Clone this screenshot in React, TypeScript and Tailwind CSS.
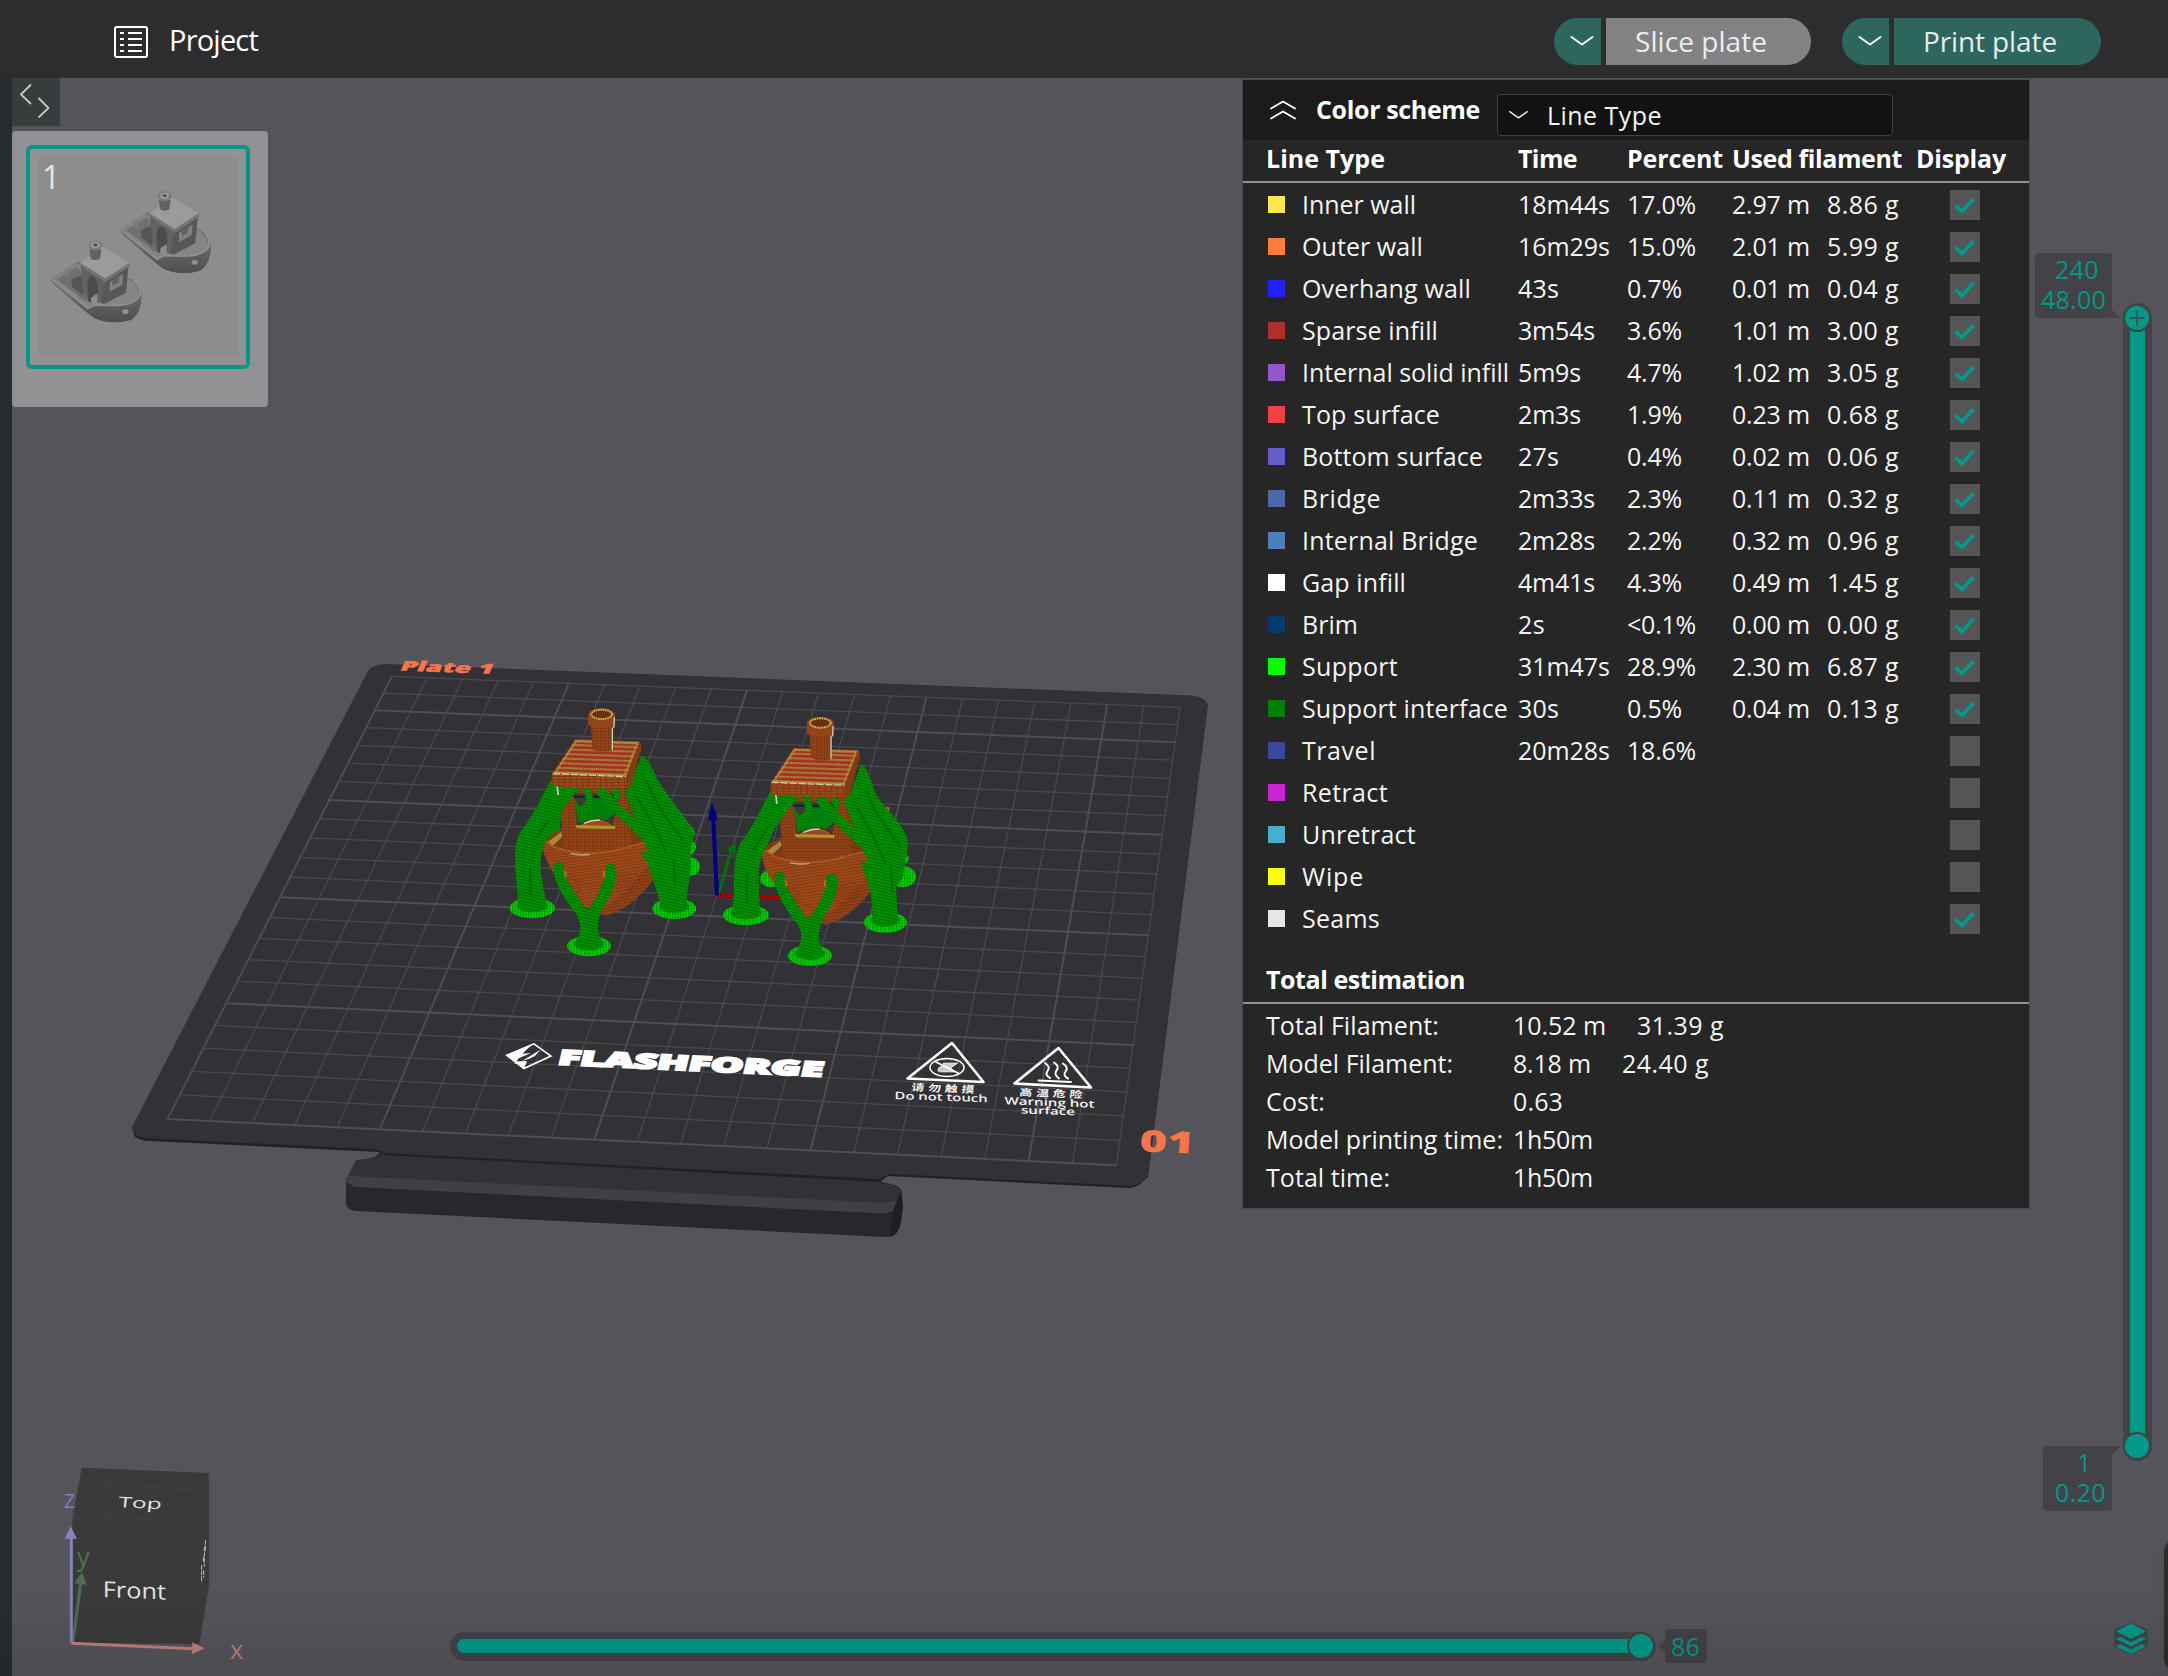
import { useLayoutEffect, useRef, useState } from "react";

type FitProps = { children: string; w: number; className?: string };

/** Text tracked so that it spans exactly `w` pixels. */
function Fit({ children, w, className = "" }: FitProps) {
  const ref = useRef<HTMLSpanElement>(null);
  const [spacing, setSpacing] = useState<number | null>(null);
  useLayoutEffect(() => {
    if (!ref.current || spacing !== null) return;
    const natural = ref.current.getBoundingClientRect().width;
    setSpacing((w - natural) / children.length);
  }, [w, children, spacing]);
  return (
    <span ref={ref} className={`inline-block w-fit whitespace-pre ${className}`} style={{ letterSpacing: spacing === null ? undefined : `${spacing}px` }}>
      {children}
    </span>
  );
}

/* ---------- data ---------- */

type Row = {
  color: string;
  name: [string, number];
  time?: [string, number];
  percent?: [string, number];
  used?: [string, string];
  on: boolean;
};

const rows: Row[] = [
  { color: "bg-[#ffe64d]", name: ["Inner wall", 114], time: ["18m44s", 92], percent: ["17.0%", 69], used: ["2.97 m", "8.86 g"], on: true },
  { color: "bg-[#ff7d38]", name: ["Outer wall", 121], time: ["16m29s", 92], percent: ["15.0%", 69], used: ["2.01 m", "5.99 g"], on: true },
  { color: "bg-[#1f1fff]", name: ["Overhang wall", 169], time: ["43s", 41], percent: ["0.7%", 55], used: ["0.01 m", "0.04 g"], on: true },
  { color: "bg-[#b03029]", name: ["Sparse infill", 136], time: ["3m54s", 77], percent: ["3.6%", 55], used: ["1.01 m", "3.00 g"], on: true },
  { color: "bg-[#9654cc]", name: ["Internal solid infill", 207], time: ["5m9s", 63], percent: ["4.7%", 55], used: ["1.02 m", "3.05 g"], on: true },
  { color: "bg-[#f04040]", name: ["Top surface", 138], time: ["2m3s", 63], percent: ["1.9%", 55], used: ["0.23 m", "0.68 g"], on: true },
  { color: "bg-[#665cc7]", name: ["Bottom surface", 181], time: ["27s", 41], percent: ["0.4%", 55], used: ["0.02 m", "0.06 g"], on: true },
  { color: "bg-[#4d66a8]", name: ["Bridge", 79], time: ["2m33s", 77], percent: ["2.3%", 55], used: ["0.11 m", "0.32 g"], on: true },
  { color: "bg-[#4d80ba]", name: ["Internal Bridge", 176], time: ["2m28s", 77], percent: ["2.2%", 55], used: ["0.32 m", "0.96 g"], on: true },
  { color: "bg-white", name: ["Gap infill", 104], time: ["4m41s", 77], percent: ["4.3%", 55], used: ["0.49 m", "1.45 g"], on: true },
  { color: "bg-[#003b6e]", name: ["Brim", 56], time: ["2s", 27], percent: ["<0.1%", 69], used: ["0.00 m", "0.00 g"], on: true },
  { color: "bg-[#00ff00]", name: ["Support", 96], time: ["31m47s", 92], percent: ["28.9%", 69], used: ["2.30 m", "6.87 g"], on: true },
  { color: "bg-[#008000]", name: ["Support interface", 206], time: ["30s", 41], percent: ["0.5%", 55], used: ["0.04 m", "0.13 g"], on: true },
  { color: "bg-[#38489b]", name: ["Travel", 74], time: ["20m28s", 92], percent: ["18.6%", 69], on: false },
  { color: "bg-[#cd22d6]", name: ["Retract", 86], on: false },
  { color: "bg-[#49adcf]", name: ["Unretract", 114], on: false },
  { color: "bg-[#ffff00]", name: ["Wipe", 62], on: false },
  { color: "bg-[#e6e6e6]", name: ["Seams", 78], on: true },
];

type Total = { label: [string, number]; value: [string, number]; extra?: string };
const totals: Total[] = [
  { label: ["Total Filament:", 173], value: ["10.52 m", 93], extra: "31.39 g" },
  { label: ["Model Filament:", 187], value: ["8.18 m", 78], extra: "24.40 g" },
  { label: ["Cost:", 59], value: ["0.63", 50] },
  { label: ["Model printing time:", 237], value: ["1h50m", 80] },
  { label: ["Total time:", 124], value: ["1h50m", 80] },
];

/* ---------- header ---------- */

function Chevron({ className }: { className: string }) {
  return (
    <svg viewBox="0 0 24 12" className={className} fill="none" stroke="currentColor" strokeWidth="2" strokeLinecap="round" strokeLinejoin="round">
      <path d="M1.5 2 12 9.5 22.5 2" />
    </svg>
  );
}

function Header() {
  return (
    <header className="flex h-[78px] shrink-0 items-center bg-[#2d2d2f] pr-[67px] pl-[114px] text-white">
      <svg viewBox="0 0 34 32" className="mt-[6px] h-8 w-[34px]" fill="none" stroke="#fff" strokeWidth="2">
        <rect x="1" y="1" width="32" height="30" rx="2" />
        <path d="M6 7h4M14 7h14M6 13h4M14 13h14M6 19h4M14 19h14M6 25h4M14 25h14" />
      </svg>
      <Fit w={89} className="ml-[21px] text-[29px] leading-none font-medium">Project</Fit>
      <div className="ml-auto flex items-center pb-px text-[28px] leading-none">
        <div className="mt-[5px] flex h-[47px] gap-[5px]">
          <div className="flex w-[47px] items-center justify-center rounded-l-full bg-[#2c665c] pl-2">
            <Chevron className="h-[12px] w-[24px]" />
          </div>
          <div className="flex w-[205px] items-center rounded-r-full bg-[#828284] pl-[29px] text-[#ececec]">
            <Fit w={132}>Slice plate</Fit>
          </div>
        </div>
        <div className="mt-[5px] ml-[31px] flex h-[47px] gap-[5px]">
          <div className="flex w-[47px] items-center justify-center rounded-l-full bg-[#2c665c] pl-2">
            <Chevron className="h-[12px] w-[24px]" />
          </div>
          <div className="flex w-[207px] items-center rounded-r-full bg-[#2c665c] pl-[29px] text-[#e3eeec]">
            <Fit w={134}>Print plate</Fit>
          </div>
        </div>
      </div>
    </header>
  );
}

/* ---------- 3D bed ---------- */

type Pt = [number, number];
// Grid corners on screen: top-left, top-right, bottom-right, bottom-left
const corners: Pt[] = [[392, 676.4], [1180, 707.3], [1116.4, 1165.3], [167.5, 1119]];

function project(u: number, v: number): Pt {
  const [[x0, y0], [x1, y1], [x2, y2], [x3, y3]] = corners;
  const dx1 = x1 - x2, dx2 = x3 - x2, sx = x0 - x1 + x2 - x3;
  const dy1 = y1 - y2, dy2 = y3 - y2, sy = y0 - y1 + y2 - y3;
  const det = dx1 * dy2 - dx2 * dy1;
  const g = (sx * dy2 - dx2 * sy) / det;
  const h = (dx1 * sy - sx * dy1) / det;
  const w = g * u + h * v + 1;
  return [
    ((x1 - x0 + g * x1) * u + (x3 - x0 + h * x3) * v + x0) / w,
    ((y1 - y0 + g * y1) * u + (y3 - y0 + h * y3) * v + y0) / w,
  ];
}

const CELLS = 22;
const steps = Array.from({ length: CELLS + 1 }, (_, i) => i);

function GridLines() {
  return (
    <g>
      {steps.map((i) => {
        const t = i / CELLS;
        const a = project(t, 0), b = project(t, 1), c = project(0, t), d = project(1, t);
        const boldCol = i % 5 === 0, boldRow = (CELLS - i) % 5 === 0;
        return (
          <g key={i}>
            <line x1={a[0]} y1={a[1]} x2={b[0]} y2={b[1]} stroke={boldCol ? "#4d4d56" : "#48484f"} strokeWidth={boldCol ? 2 : 1.3} />
            <line x1={c[0]} y1={c[1]} x2={d[0]} y2={d[1]} stroke={boldRow ? "#4d4d56" : "#48484f"} strokeWidth={boldRow ? 2 : 1.3} />
          </g>
        );
      })}
    </g>
  );
}

function Bed() {
  return (
    <g>
      {/* handle */}
      <path d="M383 1150 L375 1157 L356 1161 L346 1180 L346 1204 Q347 1210 356 1211 L885 1237 Q898 1237 901 1222 L903 1206 L901 1190 Q899 1185 890 1184 L879 1181 L888 1172Z" fill="#28272b" />
      <path d="M356 1160 L376 1158 L384 1152 L880 1178 L880 1183 L892 1185 Q901 1187 901 1194 L900 1202 L884 1205 L346 1180Z" fill="#323136" />
      <path d="M349 1176 L884 1203 L898 1200 L893 1211 L884 1213.5 L355 1187 L346 1182Z" fill="#403f44" />
      <path d="M903 1206 L901 1190 L893 1211 L890 1237 Q899 1235 901 1222Z" fill="#1f1f22" />
      {/* plate with a thin side wall */}
      <path d="M133 1126 L134 1136 Q140 1141 150 1141 L378 1152 L384 1155 L880 1182 L888 1176 L1128 1188 Q1135 1188 1140 1184 L1148 1177 L1148 1165Z" fill="#222124" />
      <path d="M368.6 669.7 Q374 664 387 664 L1192 695.5 Q1206 697 1208 705 L1148.5 1174 Q1142 1184 1132 1186 L890 1174 L879 1179 L384 1153 Q383 1150 370 1149 L145 1138 Q132 1136 132 1127Z" fill="#323136" />
      <GridLines />
      <g fill="#f8754b" fontFamily="Open Sans, sans-serif" fontWeight="800">
        <text transform="matrix(1 .035 -.45 1 399 670.5)" fontSize="13.5" textLength="93" lengthAdjust="spacingAndGlyphs" stroke="#f8754b" strokeWidth=".4">Plate 1</text>
        <text transform="matrix(1 .04 -.06 1 1139 1151.500)" fontSize="30" textLength="55" lengthAdjust="spacingAndGlyphs">01</text>
      </g>
      {/* brand */}
      <g fill="#fff">
        <path d="M505.700 1055.200 L533.900 1043.300 L520 1054 L531 1053 L512 1061 L525 1061.500 L523.900 1069Z" />
        <path d="M507 1055.300 L533.900 1043.800 L551 1056 L523.900 1068.500Z" fill="none" stroke="#fff" strokeWidth="1.6" />
        <path d="M505.700 1055.200 L524 1069 L527 1061 L522 1061.500 L514 1064 L519 1058 L525 1051 L533 1044Z" />
        <path d="M522 1061 L540 1050 L535 1056 L530 1058.500Z" />
        <text transform="matrix(1 .046 -.24 1 557 1064.500)" fontFamily="Open Sans, sans-serif" fontWeight="800" fontSize="20.500" textLength="265" lengthAdjust="spacingAndGlyphs" stroke="#fff" strokeWidth="1.7">FLASHFORGE</text>
      </g>
      {/* warnings */}
      <g fill="none" stroke="#fff" strokeLinejoin="round" strokeLinecap="round">
        <path d="M952 1043 L907.500 1078.500 L983.500 1082Z" strokeWidth="2.6" />
        <ellipse cx="947" cy="1067.500" rx="17" ry="9" strokeWidth="1.6" />
        <path d="M935 1061.500 L959 1073.500" strokeWidth="1.600" />
        <path d="M938 1071 Q937 1066 944 1066 L943 1063 L958 1063 L951 1068 L955 1072 L942 1072Z" fill="#fff" fillOpacity=".75" strokeWidth=".6" />
        <path d="M1058.500 1048 L1014.500 1083.500 L1091 1087.500Z" strokeWidth="2.600" />
        <path d="M1045 1063 q6 4 2.500 8 q-3 4 2.500 7 M1054 1062.500 q6 4 2.500 8 q-3 4 2.500 8 M1063 1063.500 q6 4 2.500 8 q-3 4 2.500 7" strokeWidth="2" />
        <path d="M1038.500 1080.500 L1071 1082" strokeWidth="1.800" />
      </g>
      <g fill="#f2f2f2" fontFamily="Open Sans, Noto Sans CJK SC, sans-serif" fontWeight="600">
        <text transform="matrix(1 .04 -.1 .72 911 1090.500)" fontSize="13" textLength="63" fontFamily="Noto Sans CJK SC, sans-serif">请勿触摸</text>
        <text transform="matrix(1 .035 0 .8 894.600 1099)" fontSize="13" textLength="93" lengthAdjust="spacingAndGlyphs">Do not touch</text>
        <text transform="matrix(1 .04 -.1 .72 1019 1095.500)" fontSize="13" textLength="63" fontFamily="Noto Sans CJK SC, sans-serif">高温危险</text>
        <text transform="matrix(1 .04 0 .8 1004.500 1104.200)" fontSize="13" textLength="90" lengthAdjust="spacingAndGlyphs">Warning hot</text>
        <text transform="matrix(1 .035 0 .8 1021 1113.500)" fontSize="13" textLength="54" lengthAdjust="spacingAndGlyphs">surface</text>
      </g>
    </g>
  );
}

/* ---------- sliced boats, drawn at three times their size ---------- */

function Foot({ x, y, rx = 66 }: { x: number; y: number; rx?: number }) {
  return (
    <g>
      <ellipse cx={x} cy={y} rx={rx} ry={31} fill="url(#foot)" />
      <ellipse cx={x} cy={y - 7} rx={rx * 0.68} ry={20} fill="#008a00" />
    </g>
  );
}

function Hull() {
  return (
    <g>
      <path d="M186 474 L245 448 L255 515 L300 522 L490 486 L548 476 L558 520 L500 540 L300 545 L215 520Z" fill="#7e3a14" />
      <path d="M200 488 L244 455 L247 470 L215 500Z" fill="#a58a35" />
      <path d="M560 352 L572 356 L566 372Z" fill="#c0602c" />
      {/* cabin */}
      <path d="M234 312 L470 318 L500 495 L410 512 L300 524 L252 516 L244 420Z" fill="url(#wall)" />
      <path d="M438 320 L468 318 L500 495 L455 500Z" fill="#7d3912" />
      <path d="M282 340 L408 340 L408 396 L396 442 L292 440Z" fill="#3a3a30" />
      <path d="M280 350 L405 350" stroke="#12204e" strokeWidth="6" />
      <path d="M282 352 L300 380 L340 356 L400 356 L408 396 L380 420 L350 415 L295 430Z" fill="#00800a" />
      <path d="M300 440 Q350 400 396 440Z" fill="#99461a" stroke="#b4571f" strokeWidth="5" />
      <path d="M312 430 Q335 420 360 420" stroke="#d8cdb8" strokeWidth="4" fill="none" />
      <path d="M286 435 L406 438 L404 447 L290 445Z" fill="#a8952c" />
      {/* hull */}
      <path d="M185 474 L226 500 Q300 530 400 513 L496 487 L560 520 L520 600 Q450 690 378 707 Q300 690 240 606 Q186 540 185 474Z" fill="url(#hull)" />
      <path d="M185 476 L226 502 Q300 530 400 513 L496 487" fill="none" stroke="#b86128" strokeWidth="6" strokeDasharray="5 3" />
      <path d="M272 521 Q300 528 330 523" stroke="#c9b7a6" strokeWidth="4" fill="none" opacity=".8" />
      <g fill="none" stroke="#7c3610" strokeWidth="3" opacity=".7">
        <ellipse cx="443" cy="612" rx="38" ry="27" transform="rotate(-35 443 612)" />
        <ellipse cx="443" cy="612" rx="24" ry="16" transform="rotate(-35 443 612)" />
        <ellipse cx="443" cy="612" rx="10" ry="7" transform="rotate(-35 443 612)" />
        <ellipse cx="278" cy="610" rx="18" ry="32" transform="rotate(-40 278 610)" />
        <ellipse cx="278" cy="610" rx="9" ry="18" transform="rotate(-40 278 610)" />
      </g>
      <path d="M520 600 Q450 690 378 707 Q360 705 345 697 Q440 650 515 540Z" fill="#000" opacity=".08" />
    </g>
  );
}

function Roof() {
  return (
    <g>
      <path d="M229 318 L234 318 L237 345 L232 345Z" fill="#d8d0c8" />
      <path d="M285 178 L476 184 Q484 187 483 205 L453 318 Q448 326 436 326 L222 319 Q214 314 215 285Z" fill="url(#brick)" />
      <path d="M440 290 L480 188 L483 208 L453 318 L440 324Z" fill="#7e3b14" />
      <path d="M286 180 L478 186 L438 290 L218 281Z" fill="#b02c28" />
      <path d="M286 180 L478 186 L438 290 L218 281Z" fill="url(#roof)" />
      <path d="M288 184 L472 190 L434 286 L226 278Z" fill="none" stroke="#b5983a" strokeWidth="6" strokeDasharray="4 2" />
      <path d="M218 281 L438 290" stroke="#cfc8a2" strokeWidth="4" strokeDasharray="22 5" />
      {/* chimney */}
      <path d="M333 130 L400 130 L400 210 Q365 222 337 208Z" fill="url(#wall)" />
      <path d="M324 104 L405 104 L406 134 Q365 152 325 136Z" fill="#94441a" />
      <ellipse cx="365" cy="104" rx="40" ry="19" fill="#94441a" />
      <ellipse cx="365" cy="103" rx="31" ry="14" fill="#6d300f" stroke="#cbb452" strokeWidth="6" strokeDasharray="5 2" />
      <path d="M403 112 L402 140 L397 146 L397 210" stroke="#cfc6bd" strokeWidth="4" fill="none" />
    </g>
  );
}

function FrontSupport() {
  return (
    <g>
      <Foot x={327} y={798} />
      <path d="M220 565 Q222 546 238 546 Q254 550 252 572 Q258 605 322 690 Q376 620 374 575 Q378 550 394 551 Q410 555 410 578 Q408 620 380 665 Q352 705 354 750 L366 790 Q326 812 288 792 L300 750 Q304 730 290 705 Q222 620 220 565Z" fill="url(#green)" />
      <path d="M252 572 q8 10 2 18 M375 572 q-8 8 0 20" stroke="#c0632b" strokeWidth="6" fill="none" />
    </g>
  );
}

function TwigSupports() {
  return (
    <g fill="none" stroke="url(#green)" strokeLinecap="round" strokeLinejoin="round">
      <path d="M272 332 L215 410 L175 470" strokeWidth="28" />
      <path d="M265 328 L290 332" strokeWidth="14" />
      <path d="M322 330 L330 360 L318 390" strokeWidth="22" />
      <path d="M366 336 L410 385 L500 470 L545 560" strokeWidth="30" />
      <path d="M408 335 L412 350" strokeWidth="22" />
      <path d="M455 335 Q480 420 565 520" strokeWidth="40" />
    </g>
  );
}

function Boats() {
  return (
    <g transform="translate(480 680) scale(.33333)">
      {/* left model */}
      <g fill="url(#foot)">
        <circle cx="622" cy="458" r="22" />
        <circle cx="626" cy="502" r="22" />
        <circle cx="632" cy="560" r="28" />
      </g>
      <path d="M196 400 L244 400 L240 450 L215 475 L190 470Z" fill="#00860a" />
      <Hull />
      <Foot x={157} y={684} rx={68} />
      <Foot x={583} y={686} rx={66} />
      <path d="M213 300 C190 340 165 400 122 455 C98 490 106 560 110 610 L116 682 Q155 706 202 684 L186 600 C178 550 182 510 202 478 L232 442 L246 395 L262 330Z" fill="url(#green)" />
      <path d="M484 228 C508 232 516 270 540 310 C575 365 625 420 640 452 C646 480 628 490 632 540 C634 600 616 640 622 684 Q585 706 544 684 C536 640 512 590 505 555 L481 516 L530 518 C500 460 460 410 436 335 L455 300Z" fill="url(#green)" />
      <TwigSupports />
      <path d="M500 300 Q520 370 610 480 M470 350 Q520 430 560 520 M580 540 L585 610 M205 420 L165 480 M150 560 L152 650" stroke="#006400" strokeWidth="6" fill="none" opacity=".7" />
      <Roof />
      <FrontSupport />

      {/* origin axes */}
      <path d="M711 645 L900 653" stroke="#a30000" strokeWidth="11" />
      <path d="M716 642 L752 518" stroke="#006f10" strokeWidth="9" />
      <path d="M766 485 L740 510 L768 522Z" fill="#006f10" />
      <path d="M711 647 L700 420" stroke="#00007e" strokeWidth="12" />
      <path d="M696 367 L684 418 Q700 428 714 418Z" fill="#00007e" />

      {/* right model */}
      <g fill="url(#foot)">
        <ellipse cx="1268" cy="590" rx="40" ry="32" />
        <ellipse cx="872" cy="596" rx="32" ry="26" />
        <circle cx="1268" cy="535" r="18" />
      </g>
      <path d="M1120 400 L1145 420 L1150 520 L1120 520Z" fill="#8e1f1f" />
      <g transform="translate(658 27)"><Hull /></g>
      <Foot x={798} y={705} rx={69} />
      <Foot x={1216} y={727} rx={65} />
      <path d="M873 330 C850 370 820 440 782 488 C760 530 762 590 762 640 L756 700 Q798 724 840 700 L836 610 C834 570 840 530 860 500 L905 400 L930 350Z" fill="url(#green)" />
      <path d="M1142 254 C1166 262 1170 300 1192 350 C1225 395 1275 440 1283 480 C1286 520 1270 560 1270 590 L1248 620 L1254 725 Q1215 744 1180 725 C1178 670 1170 620 1155 585 L1144 545 L1188 545 C1165 490 1120 420 1096 362 L1115 330Z" fill="url(#green)" />
      <g transform="translate(658 27)"><TwigSupports /></g>
      <path d="M1160 330 Q1180 400 1262 500 M1130 380 Q1180 460 1215 550 M1232 560 L1238 640 M865 440 L820 510 M800 580 L800 670" stroke="#006400" strokeWidth="6" fill="none" opacity=".7" />
      <g transform="translate(656 26)"><Roof /></g>
      <g transform="translate(663 29)"><FrontSupport /></g>
    </g>
  );
}

function Patterns() {
  return (
    <defs>
      <pattern id="green" width="8" height="9" patternUnits="userSpaceOnUse" patternTransform="rotate(12)">
        <rect width="8" height="9" fill="#009a00" />
        <path d="M0 2H8" stroke="#007000" strokeWidth="4" />
        <path d="M1 6H4" stroke="#008400" strokeWidth="3" />
      </pattern>
      <pattern id="foot" width="8" height="9" patternUnits="userSpaceOnUse">
        <rect width="8" height="9" fill="#00da00" />
        <path d="M2 0V9" stroke="#008c00" strokeWidth="3" />
        <path d="M0 1H8" stroke="#00a800" strokeWidth="2" />
      </pattern>
      <pattern id="wall" width="8" height="9" patternUnits="userSpaceOnUse">
        <rect width="8" height="9" fill="#9a481b" />
        <path d="M0 2H8M1 0V9" stroke="#7c3711" strokeWidth="3" />
      </pattern>
      <pattern id="hull" width="8" height="9" patternUnits="userSpaceOnUse" patternTransform="rotate(-8)">
        <rect width="8" height="9" fill="#a14b1c" />
        <path d="M0 2H8" stroke="#843b13" strokeWidth="4" />
      </pattern>
      <pattern id="brick" width="18" height="9" patternUnits="userSpaceOnUse">
        <rect width="18" height="9" fill="#9e4b1c" />
        <path d="M0 1H18M2 0V9" stroke="#783610" strokeWidth="3" />
      </pattern>
      <pattern id="roof" width="6" height="14" patternUnits="userSpaceOnUse" patternTransform="rotate(2)">
        <rect width="6" height="6" fill="#a88b36" />
        <rect width="2" height="14" fill="#7a3a1e" opacity=".6" />
      </pattern>
      <linearGradient id="deck" x1="0" y1="0" x2="0" y2="1">
        <stop offset="0" stopColor="#777" />
        <stop offset="1" stopColor="#4e4e4e" />
      </linearGradient>
    </defs>
  );
}

/* ---------- view cube ---------- */

function ViewCube() {
  return (
    <g transform="translate(0 1420) scale(.33333)">
      <path d="M245 143 L627 159 L627 500 L620 540 L598 672 L215 668 L217 300Z" fill="#3a3a3a" />
      <g stroke="#464648" strokeWidth="2" fill="none">
        <path d="M240 193 L622 209 M220 290 L575 304 M340 148 L310 335 M530 158 L500 350 M620 200 L597 350 M627 159 V500" />
      </g>
      <path d="M616 360 V395 M613 380 V440 M610 410 V425 M605 435 V487 M611 450 V472" stroke="#d8d8d8" strokeWidth="2.500" strokeDasharray="14 3" />
      <g fill="#e2e2e2" fontFamily="Open Sans, sans-serif">
        <text transform="matrix(1 .04 -.1 1 354 262)" fontSize="44" textLength="130" lengthAdjust="spacingAndGlyphs">Top</text>
        <text transform="matrix(1 .04 0 1 308 531)" fontSize="66" textLength="190" lengthAdjust="spacingAndGlyphs">Front</text>
      </g>
      <path d="M219 664 L242 490" stroke="#4f6d50" strokeWidth="9" />
      <path d="M246 456 L223 490 L260 494Z" fill="#4f6d50" />
      <path d="M214 668 V350" stroke="#8484c4" strokeWidth="9" />
      <path d="M212 319 L194 356 H231Z" fill="#8484c4" />
      <path d="M214 670 L580 686" stroke="#c07c7a" strokeWidth="9" />
      <path d="M614 685 L577 667 L576 703Z" fill="#c07c7a" />
      <g fontFamily="Open Sans, sans-serif" fontSize="76">
        <text x="192" y="265" fill="#7d7dba" fontSize="58">Z</text>
        <text x="231" y="439" fill="#52704f">y</text>
        <text x="690" y="717" fill="#c07c7a">x</text>
      </g>
    </g>
  );
}

/* ---------- plate thumbnail ---------- */

function MiniBoat() {
  return (
    <g>
      <path d="M361 693 L440 637 L480 650 L600 690 Q630 700 633 740 Q630 795 600 812 Q540 828 490 806 Q430 760 370 705Z" fill="#686868" />
      <path d="M368 690 L440 642 L470 660 L600 692 Q625 712 624 742 Q600 765 565 764 L492 766 L474 776Z" fill="#858585" />
      <path d="M378 690 L440 652 L465 690 L470 760Z" fill="#6f6f6f" />
      <path d="M362 692 L471 780 L492 768 Q560 772 590 766 Q628 755 632 742 Q630 795 600 812 Q540 828 490 806 Q430 762 362 692Z" fill="url(#deck)" />
      <path d="M363 690 L472 777 L492 766 Q560 770 590 764 Q625 752 628 735 Q628 705 602 687" fill="none" stroke="#8f8f8f" strokeWidth="6" />
      <path d="M363 690 L440 638" stroke="#858585" strokeWidth="6" />
      <path d="M422 690 L455 678 L458 740 L424 712Z" fill="#555" />
      <path d="M404 658 h14 v24 h-14Z" fill="#7b7b7b" />
      <path d="M449 640 L524 688 L514 762 L470 750 L456 720Z" fill="#626262" />
      <path d="M472 755 L470 700 Q474 675 490 682 Q502 692 502 720 L502 740 L484 745 L480 760Z" fill="#4c4c4c" />
      <path d="M481 745 L500 732 V765 L481 758Z" fill="#8d8d8d" />
      <path d="M524 686 L594 646 L586 730 L520 764 L512 760Z" fill="#575757" />
      <path d="M537 698 L577 674 L575 706 L537 727Z" fill="#828282" />
      <path d="M545 690 L566 680 L564 700 L545 708Z" fill="#626262" />
      <path d="M447 640 L517 594 L597 640 L524 688Z" fill="#9b9b9b" />
      <path d="M447 640 L524 688 L597 640 V651 L524 699 L449 650Z" fill="#747474" />
      <path d="M477 600 H512 L508 628 Q493 636 480 628Z" fill="#616161" />
      <ellipse cx="494" cy="589" rx="20" ry="15" fill="#7c7c7c" />
      <ellipse cx="494" cy="587" rx="13" ry="9" fill="#9f9f9f" />
      <ellipse cx="494" cy="587" rx="7" ry="5" fill="#555" />
      <ellipse cx="584" cy="787" rx="9" ry="7" fill="#929292" />
    </g>
  );
}

function PlateCard() {
  return (
    <div className="mt-[5px] h-[276px] w-[256px] rounded bg-[#929294] pt-[14px] pl-[14px]">
      <div className="h-[224px] w-[224px] rounded-md border-4 border-[#009888] p-[8px]">
        <div className="relative size-[200px] bg-[#8d8d8e] pt-[4px] pl-[4px] text-[32px] leading-[32px] text-[#e6e6e6]">
          1
          <svg viewBox="114 471 600 600" className="absolute inset-0 h-full w-full">
            <MiniBoat />
            <g transform="translate(-208 148)"><MiniBoat /></g>
          </svg>
        </div>
      </div>
    </div>
  );
}

/* ---------- legend panel ---------- */

function Check({ on }: { on: boolean }) {
  return (
    <span className="mt-px ml-[34px] flex size-[30px] items-center justify-center bg-[#555556]">
      {on && (
        <svg viewBox="0 0 30 30" className="size-[30px]" fill="none" stroke="#009888" strokeWidth="4">
          <path d="M5.500 15.500 12 21.500 23.500 9" />
        </svg>
      )}
    </span>
  );
}

function Legend() {
  return (
    <section className="absolute top-px left-[1242px] flex h-[1130px] w-[788px] flex-col border border-[#47474c] bg-[#262626] text-[25px] leading-[34px] text-[#f4f4f4]">
      <div className="flex h-[60px] shrink-0 items-center bg-[#1b1b1c] pb-[2px] pl-[27px]">
        <svg viewBox="0 0 26 20" className="mt-px h-5 w-[26px]" fill="none" stroke="#fff" strokeWidth="1.8" strokeLinecap="round" strokeLinejoin="round">
          <path d="M1 8.500 13 1.500 25 8.500M1 18.500 13 11.500 25 18.500" />
        </svg>
        <Fit w={164} className="ml-5 font-bold text-white">Color scheme</Fit>
        <div className="mt-[12px] ml-[17px] flex h-[42px] w-[396px] items-center rounded border border-[#3f3f46] bg-[#121212] pb-px pl-[10px]">
          <Chevron className="h-[10px] w-[21px] stroke-[1.6]" />
          <Fit w={115} className="ml-[18px]">Line Type</Fit>
        </div>
      </div>
      <div className="grid h-[43px] shrink-0 grid-cols-[252px_109px_105px_184px_1fr] items-center border-b-2 border-[#909192] pb-[6px] pl-[23px] font-bold text-white">
        <Fit w={119}>Line Type</Fit>
        <Fit w={59}>Time</Fit>
        <Fit w={96}>Percent</Fit>
        <Fit w={170}>Used filament</Fit>
        <Fit w={90}>Display</Fit>
      </div>
      <div className="flex shrink-0 flex-col">
        {rows.map((r) => (
          <div key={r.name[0]} className="grid h-[42px] grid-cols-[36px_216px_109px_105px_95px_89px_1fr] items-center pl-[23px]">
            <span className={`ml-[2px] size-[17px] ${r.color}`} />
            <Fit w={r.name[1]}>{r.name[0]}</Fit>
            <div>{r.time && <Fit w={r.time[1]}>{r.time[0]}</Fit>}</div>
            <div>{r.percent && <Fit w={r.percent[1]}>{r.percent[0]}</Fit>}</div>
            <div>{r.used && <Fit w={78}>{r.used[0]}</Fit>}</div>
            <div>{r.used && <Fit w={72}>{r.used[1]}</Fit>}</div>
            <Check on={r.on} />
          </div>
        ))}
      </div>
      <div className="mt-[18px] flex h-[47px] shrink-0 items-center border-b-2 border-[#909192] pb-[2px] pl-[23px] font-bold text-white">
        <Fit w={199}>Total estimation</Fit>
      </div>
      <div className="mt-[2px] flex flex-col pl-[23px]">
        {totals.map((t) => (
          <div key={t.label[0]} className="flex h-[38px] items-center">
            <div className="w-[247px]"><Fit w={t.label[1]}>{t.label[0]}</Fit></div>
            <Fit w={t.value[1]}>{t.value[0]}</Fit>
            {t.extra && <Fit w={87} className="ml-[31px]">{t.extra}</Fit>}
          </div>
        ))}
      </div>
    </section>
  );
}

/* ---------- sliders ---------- */

function LayerSlider() {
  return (
    <>
      <div className="absolute top-[225px] left-[2123px] flex h-[1158px] w-[29px] justify-center rounded-full bg-[#434247] py-[15px]">
        <div className="w-[15px] bg-[#009888]" />
        <div className="absolute top-[1px] left-0 flex size-[28px] items-center justify-center rounded-full border-2 border-[#434247] bg-[#009888]">
          <svg viewBox="0 0 16 16" className="size-4" stroke="#434247" strokeWidth="1.4">
            <path d="M8 .5V15.500M.5 8H15.500" />
          </svg>
        </div>
        <div className="absolute bottom-[1px] left-0 size-[28px] rounded-full border-2 border-[#434247] bg-[#009888]" />
      </div>
      <div className="absolute top-[175px] left-[2035px] h-[65px] w-[77px] rounded-sm bg-[#434247] text-[25px] leading-[30px] text-[#009888]">
        <div className="flex flex-col pt-px">
          <Fit w={44} className="ml-[20px]">240</Fit>
          <Fit w={65} className="ml-[6px]">48.00</Fit>
        </div>
        <svg viewBox="0 0 9 8" className="absolute right-[-9px] bottom-0 h-2 w-[9px]"><path d="M0 0 9 8H0Z" fill="#434247" /></svg>
      </div>
      <div className="absolute top-[1368px] left-[2043px] h-[65px] w-[69px] rounded-sm bg-[#434247] text-[25px] leading-[30px] text-[#009888]">
        <div className="flex flex-col pt-px">
          <span className="ml-[34px]">1</span>
          <Fit w={51} className="ml-[12px]">0.20</Fit>
        </div>
        <svg viewBox="0 0 9 8" className="absolute top-0 right-[-9px] h-2 w-[9px]"><path d="M0 0H9L0 8Z" fill="#434247" /></svg>
      </div>
      <svg viewBox="0 0 102 100" className="absolute top-[1544px] left-[2114px] h-[33px] w-[34px]">
        <path d="M51 2 L101 22 V76 L51 99 L1 76 V22Z" fill="#434247" />
        <g fill="#009888" stroke="#009888" strokeWidth="2" strokeLinejoin="round">
          <path d="M51 6 L95 28 L51 50 L7 28Z" />
          <path d="M7 51 L18 46 L51 62 L84 46 L95 51 L51 73Z" />
          <path d="M7 74 L18 68 L51 84 L84 68 L95 74 L51 96Z" />
        </g>
      </svg>
    </>
  );
}

function MoveSlider() {
  return (
    <div className="absolute top-[1551px] left-[450px] flex items-center">
      <div className="relative flex h-[29px] w-[1206px] items-center rounded-full bg-[#434247] px-[7px]">
        <div className="h-[14px] w-[1180px] rounded-l-full bg-[#009888]" />
        <div className="absolute top-[0.500px] right-px size-[28px] rounded-full border-2 border-[#434247] bg-[#009888]" />
      </div>
      <svg viewBox="0 0 7 10" className="ml-[2px] h-[10px] w-[7px]"><path d="M0 5 7 0V10Z" fill="#434247" /></svg>
      <div className="flex h-[34px] w-[42px] items-center rounded-sm bg-[#434247] pl-[6px] text-[25px] leading-none text-[#009888]">
        <Fit w={29}>86</Fit>
      </div>
    </div>
  );
}

export default function App() {
  return (
    <div className="flex h-[1676px] w-[2168px] flex-col overflow-hidden bg-[#55545a] font-['Open_Sans',sans-serif]">
      <Header />
      <main className="relative flex flex-1">
        <div className="w-3 bg-[#262d2f]" />
        <svg viewBox="0 78 2168 1598" className="absolute inset-0 h-[1598px] w-[2168px]">
          <Patterns />
          <Bed />
          <Boats />
          <ViewCube />
        </svg>
        <div className="relative flex flex-col">
          <div className="flex size-12 items-center justify-center bg-[#393c3c]">
            <svg viewBox="0 0 48 48" className="size-12" fill="none" stroke="#c6c8c8" strokeWidth="1.8" strokeLinecap="round" strokeLinejoin="round">
              <path d="M18.500 7 9 16.500 18.500 25.500M27 20.500 36.500 30 27 39" />
            </svg>
          </div>
          <PlateCard />
        </div>
        <Legend />
        <LayerSlider />
        <MoveSlider />
        <div className="absolute top-[1460px] right-[-26px] h-[134px] w-[30px] rounded-[14px] bg-[#2b2e2d] shadow-lg" />
        <div className="pointer-events-none absolute inset-x-0 bottom-0 h-[90px] bg-linear-to-t from-black/10 to-transparent" />
      </main>
    </div>
  );
}
